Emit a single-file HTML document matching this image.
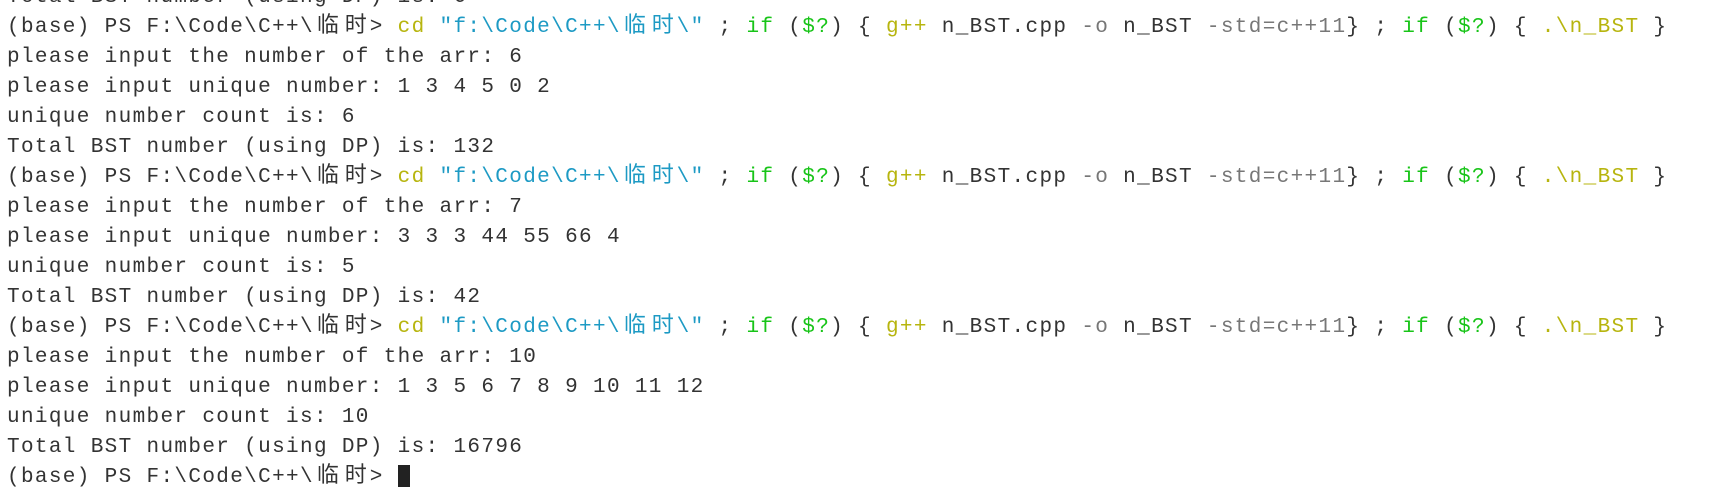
<!DOCTYPE html>
<html><head><meta charset="utf-8"><style>
html,body{margin:0;padding:0;background:#fff;width:1724px;height:473px;overflow:hidden}
.t{position:absolute;left:7px;top:-17px;margin:0;font-family:"Liberation Mono","Noto Sans CJK SC",monospace;font-size:21px;letter-spacing:1.35px;line-height:30px;color:#333}
.t div{height:30px;overflow:visible;white-space:pre}
.k{display:inline-block;width:27.9px;line-height:20px;letter-spacing:0;font-family:"Noto Sans CJK SC",sans-serif;font-size:22px;text-align:center;vertical-align:baseline}
.y{color:#b7b50f}.s{color:#1d9ac4}.g{color:#18c418}.m{color:#777}
.cur{display:inline-block;width:12px;height:22px;background:#222;vertical-align:-5px}
</style></head><body><div class="t"><div>Total BST number (using DP) is: 6</div><div>(base) PS F:\Code\C++\<span class="k">临</span><span class="k">时</span>&gt; <span class="y">cd</span> <span class="s">"f:\Code\C++\<span class="k">临</span><span class="k">时</span>\"</span> ; <span class="g">if</span> (<span class="g">$?</span>) { <span class="y">g++</span> n_BST.cpp <span class="m">-o</span> n_BST <span class="m">-std=c++11</span>} ; <span class="g">if</span> (<span class="g">$?</span>) { <span class="y">.\n_BST</span> }</div><div>please input the number of the arr: 6</div><div>please input unique number: 1 3 4 5 0 2</div><div>unique number count is: 6</div><div>Total BST number (using DP) is: 132</div><div>(base) PS F:\Code\C++\<span class="k">临</span><span class="k">时</span>&gt; <span class="y">cd</span> <span class="s">"f:\Code\C++\<span class="k">临</span><span class="k">时</span>\"</span> ; <span class="g">if</span> (<span class="g">$?</span>) { <span class="y">g++</span> n_BST.cpp <span class="m">-o</span> n_BST <span class="m">-std=c++11</span>} ; <span class="g">if</span> (<span class="g">$?</span>) { <span class="y">.\n_BST</span> }</div><div>please input the number of the arr: 7</div><div>please input unique number: 3 3 3 44 55 66 4</div><div>unique number count is: 5</div><div>Total BST number (using DP) is: 42</div><div>(base) PS F:\Code\C++\<span class="k">临</span><span class="k">时</span>&gt; <span class="y">cd</span> <span class="s">"f:\Code\C++\<span class="k">临</span><span class="k">时</span>\"</span> ; <span class="g">if</span> (<span class="g">$?</span>) { <span class="y">g++</span> n_BST.cpp <span class="m">-o</span> n_BST <span class="m">-std=c++11</span>} ; <span class="g">if</span> (<span class="g">$?</span>) { <span class="y">.\n_BST</span> }</div><div>please input the number of the arr: 10</div><div>please input unique number: 1 3 5 6 7 8 9 10 11 12</div><div>unique number count is: 10</div><div>Total BST number (using DP) is: 16796</div><div>(base) PS F:\Code\C++\<span class="k">临</span><span class="k">时</span>&gt; <span class="cur"></span></div></div></body></html>
